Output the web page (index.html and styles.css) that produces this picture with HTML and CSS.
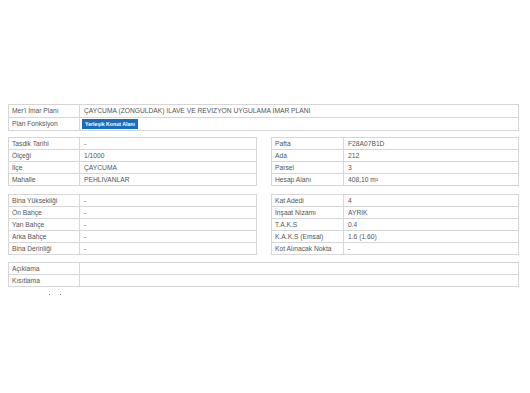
FILE: index.html
```html
<!DOCTYPE html>
<html lang="tr">
<head>
<meta charset="utf-8">
<title>İmar Durumu</title>
<link rel="stylesheet" href="styles.css">
</head>
<body>
<div class="page">
  <table class="grid top">
    <tr><td class="lbl">Mer'i İmar Planı</td><td>ÇAYCUMA (ZONGULDAK) İLAVE VE REVİZYON UYGULAMA İMAR PLANI</td></tr>
    <tr><td class="lbl">Plan Fonksiyon</td><td><span class="badge">Yerleşik Konut Alanı</span></td></tr>
  </table>

  <div class="pair g2">
    <table class="grid">
      <tr><td class="lbl">Tasdik Tarihi</td><td>-</td></tr>
      <tr><td class="lbl">Ölçeği</td><td>1/1000</td></tr>
      <tr><td class="lbl">İlçe</td><td>ÇAYCUMA</td></tr>
      <tr><td class="lbl">Mahalle</td><td>PEHLİVANLAR</td></tr>
    </table>
    <table class="grid">
      <tr><td class="lbl">Pafta</td><td>F28A07B1D</td></tr>
      <tr><td class="lbl">Ada</td><td>212</td></tr>
      <tr><td class="lbl">Parsel</td><td>3</td></tr>
      <tr><td class="lbl">Hesap Alanı</td><td>408,10 m²</td></tr>
    </table>
  </div>

  <div class="pair g3">
    <table class="grid">
      <tr><td class="lbl">Bina Yüksekliği</td><td>-</td></tr>
      <tr><td class="lbl">Ön Bahçe</td><td>-</td></tr>
      <tr><td class="lbl">Yan Bahçe</td><td>-</td></tr>
      <tr><td class="lbl">Arka Bahçe</td><td>-</td></tr>
      <tr><td class="lbl">Bina Derinliği</td><td>-</td></tr>
    </table>
    <table class="grid">
      <tr><td class="lbl">Kat Adedi</td><td>4</td></tr>
      <tr><td class="lbl">İnşaat Nizamı</td><td>AYRIK</td></tr>
      <tr><td class="lbl">T.A.K.S</td><td>0.4</td></tr>
      <tr><td class="lbl">K.A.K.S (Emsal)</td><td>1.6 (1.60)</td></tr>
      <tr><td class="lbl">Kot Alınacak Nokta</td><td>-</td></tr>
    </table>
  </div>

  <table class="grid g4">
    <tr><td class="lbl">Açıklama</td><td></td></tr>
    <tr><td class="lbl">Kısıtlama</td><td></td></tr>
  </table>

  <div class="dots"><span></span><span></span></div>
</div>
</body>
</html>
```
FILE: styles.css
```css
html, body {
  margin: 0;
  padding: 0;
  background: #ffffff;
}
.page {
  padding: 104px 11px 0 8px;
  width: 511px;
  font-family: "Liberation Sans", Arial, sans-serif;
  font-size: 6.7px;
  color: #555555;
}
.grid {
  border-collapse: collapse;
  width: 100%;
  table-layout: fixed;
}
.grid td {
  border: 1px solid #d6d6d6;
  height: 11px;
  line-height: 11px;
  padding: 0 0 0 3px;
  white-space: nowrap;
  overflow: hidden;
  vertical-align: middle;
}
.grid td + td {
  padding-left: 4px;
}
.grid .lbl {
  width: 67px;
}
.top td {
  height: 12px;
  line-height: 12px;
}
.badge {
  display: inline-block;
  background: #1a6cbf;
  color: #ffffff;
  font-weight: bold;
  font-size: 5.2px;
  line-height: 10px;
  padding: 0 3px;
  margin-left: -2px;
  vertical-align: middle;
}
.pair {
  display: flex;
  gap: 14px;
}
.pair .grid {
  width: 249px;
}
.pair .grid + .grid {
  width: 248px;
}
.pair .grid + .grid .lbl {
  width: 68px;
}
.g2 {
  margin-top: 6px;
}
.g3 {
  margin-top: 8px;
}
.g4 {
  margin-top: 7px;
}
.dots {
  display: flex;
  gap: 10px;
  padding: 7px 0 0 41px;
}
.dots span {
  width: 1px;
  height: 1px;
  background: #777777;
}
```
